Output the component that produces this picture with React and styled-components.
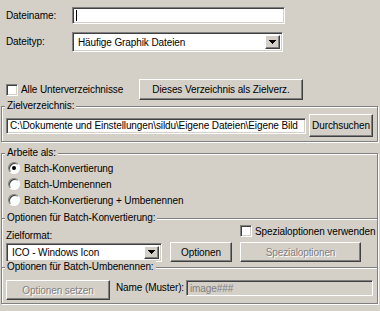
import React from 'react'
import styled, { createGlobalStyle, css } from 'styled-components'

const face = '#d4d0c8'

const GlobalStyle = createGlobalStyle`
  html, body {
    margin: 0;
    padding: 0;
    background: ${face};
  }
  body {
    font-family: 'Liberation Sans', Arial, sans-serif;
    font-size: 10px;
    letter-spacing: -0.1px;
    color: #000;
  }
`

const sunken = css`
  box-sizing: border-box;
  border: 1px solid;
  border-color: #808080 #fff #fff #808080;
  box-shadow: inset 1px 1px 0 #404040, inset -1px -1px 0 ${face};
`

const raised = css`
  box-sizing: border-box;
  border: 1px solid;
  border-color: #fff #404040 #404040 #fff;
  box-shadow: inset -1px -1px 0 #808080;
`

const Dialog = styled.div`
  width: 380px;
  height: 311px;
  box-sizing: border-box;
  padding: 7px 2px 0 1px;
  display: flex;
  flex-direction: column;
`

const Top = styled.div`
  padding-left: 5px;
  display: flex;
  flex-direction: column;
`

const Row = styled.div`
  display: flex;
  align-items: ${(p) => p.$align || 'center'};
  margin-top: ${(p) => p.$mt || 0}px;
  gap: ${(p) => p.$gap || 0}px;
`

const Label = styled.div`
  width: ${(p) => p.$w}px;
  flex: none;
  white-space: nowrap;
  line-height: ${(p) => p.$lh || 12}px;
  margin-left: ${(p) => p.$ml || 0}px;
`

const Field = styled.div`
  ${sunken};
  width: ${(p) => p.$w}px;
  height: ${(p) => p.$h || 16}px;
  background: ${(p) => (p.$disabled ? face : '#fff')};
  color: ${(p) => (p.$disabled ? '#808080' : '#000')};
  display: flex;
  align-items: center;
  padding: 0 3px;
  white-space: nowrap;
  overflow: hidden;
  flex: none;
`

const Caret = styled.span`
  width: 1px;
  height: 11px;
  background: #000;
`

const Combo = styled.div`
  ${sunken};
  width: ${(p) => p.$w}px;
  height: ${(p) => p.$h}px;
  background: #fff;
  display: flex;
  align-items: center;
  padding: 2px;
  flex: none;
`

const ComboText = styled.div`
  flex: 1;
  padding-left: 3px;
  white-space: nowrap;
  overflow: hidden;
`

const ArrowButton = styled.div`
  ${raised};
  width: 15px;
  height: 100%;
  background: ${face};
  display: flex;
  align-items: center;
  justify-content: center;
`

const Button = styled.div`
  ${raised};
  width: ${(p) => p.$w}px;
  height: ${(p) => p.$h || 20}px;
  background: ${face};
  display: flex;
  align-items: center;
  justify-content: center;
  white-space: nowrap;
  flex: none;
  color: ${(p) => (p.$disabled ? '#808080' : '#000')};
  text-shadow: ${(p) => (p.$disabled ? '1px 1px 0 #fff' : 'none')};
`

const CheckBox = styled.span`
  ${sunken};
  width: 12px;
  height: 12px;
  background: #fff;
  flex: none;
`

const CheckLabel = styled.label`
  display: flex;
  align-items: center;
  gap: 3px;
  width: ${(p) => p.$w || 'auto'};
  white-space: nowrap;
  flex: none;
`

const Group = styled.div`
  margin-top: ${(p) => p.$mt || 0}px;
  border: 1px solid #808080;
  box-shadow: inset 1px 1px 0 #fff, 1px 1px 0 #fff;
  padding: 0 4px ${(p) => p.$pb}px 4px;
  display: flex;
  flex-direction: column;
`

const Caption = styled.div`
  align-self: flex-start;
  margin: -7px 0 0 -1px;
  padding: 0 2px;
  height: 12px;
  line-height: 12px;
  background: ${face};
  white-space: nowrap;
`

const RadioList = styled.div`
  margin-top: 1px;
  padding-left: 2px;
  display: flex;
  flex-direction: column;
`

const RadioRow = styled.label`
  height: 16px;
  display: flex;
  align-items: center;
  gap: 4px;
`

const Radio = styled.span`
  box-sizing: border-box;
  width: 12px;
  height: 12px;
  border-radius: 50%;
  border: 1px solid;
  border-color: #808080 #fff #fff #808080;
  box-shadow: inset 1px 1px 0 #404040;
  background: #fff;
  display: flex;
  align-items: center;
  justify-content: center;
  &::after {
    content: '';
    width: 4px;
    height: 4px;
    border-radius: 50%;
    background: ${(p) => (p.$checked ? '#000' : 'transparent')};
  }
`

const FormatGrid = styled.div`
  display: grid;
  grid-template-columns: 156px 62px 121px;
  grid-template-rows: 18px 20px;
  column-gap: 8px;
  align-items: center;
`

const GridCell = styled.div`
  grid-column: ${(p) => p.$col};
  align-self: ${(p) => p.$self || 'center'};
  padding-top: ${(p) => p.$pt || 0}px;
`

const Arrow = () => (
  <svg width="7" height="4" viewBox="0 0 7 4" shapeRendering="crispEdges">
    <path d="M0 0h7L4 4H3z" fill="#000" />
  </svg>
)

const Select = ({ w, h, children }) => (
  <Combo $w={w} $h={h}>
    <ComboText>{children}</ComboText>
    <ArrowButton>
      <Arrow />
    </ArrowButton>
  </Combo>
)

const options = [
  { label: 'Batch-Konvertierung', checked: true },
  { label: 'Batch-Umbenennen' },
  { label: 'Batch-Konvertierung + Umbenennen' },
]

export default function App() {
  return (
    <>
      <GlobalStyle />
      <Dialog>
        <Top>
          <Row>
            <Label $w={66}>Dateiname:</Label>
            <Field $w={213} $h={17}>
              <Caret />
            </Field>
          </Row>
          <Row $mt={8}>
            <Label $w={66}>Dateityp:</Label>
            <Select w={211} h={20}>Häufige Graphik Dateien</Select>
          </Row>
          <Row $mt={27}>
            <CheckLabel $w="133px">
              <CheckBox />
              Alle Unterverzeichnisse
            </CheckLabel>
            <Button $w={164} $h={21}>Dieses Verzeichnis als Zielverz.</Button>
          </Row>
        </Top>

        <Group $mt={6} $pb={4}>
          <Caption>Zielverzeichnis:</Caption>
          <Row $mt={2} $gap={3}>
            <Field $w={300}>C:\Dokumente und Einstellungen\sildu\Eigene Dateien\Eigene Bild</Field>
            <Button $w={64} $h={23}>Durchsuchen</Button>
          </Row>
        </Group>

        <Group $mt={11} $pb={10}>
          <Caption>Arbeite als:</Caption>
          <RadioList>
            {options.map((o) => (
              <RadioRow key={o.label}>
                <Radio $checked={o.checked} />
                {o.label}
              </RadioRow>
            ))}
          </RadioList>
        </Group>

        <Group $mt={-1} $pb={5}>
          <Caption>Optionen für Batch-Konvertierung:</Caption>
          <FormatGrid>
            <GridCell $col={1} $self="end">
              <Label $w={156}>Zielformat:</Label>
            </GridCell>
            <GridCell $col={3} $self="start" $pt={1}>
              <CheckLabel>
                <CheckBox />
                Spezialoptionen verwenden
              </CheckLabel>
            </GridCell>
            <GridCell $col={1}>
              <Select w={156} h={19}>ICO - Windows Icon</Select>
            </GridCell>
            <GridCell $col={2}>
              <Button $w={62}>Optionen</Button>
            </GridCell>
            <GridCell $col={3}>
              <Button $w={121} $disabled>Spezialoptionen</Button>
            </GridCell>
          </FormatGrid>
        </Group>

        <Group $mt={-1} $pb={3}>
          <Caption>Optionen für Batch-Umbenennen:</Caption>
          <Row $mt={7} $align="flex-start">
            <Button $w={104} $disabled>Optionen setzen</Button>
            <Label $w={70} $lh={16} $ml={6}>Name (Muster):</Label>
            <Field $w={187} $disabled>image###</Field>
          </Row>
        </Group>
      </Dialog>
    </>
  )
}
